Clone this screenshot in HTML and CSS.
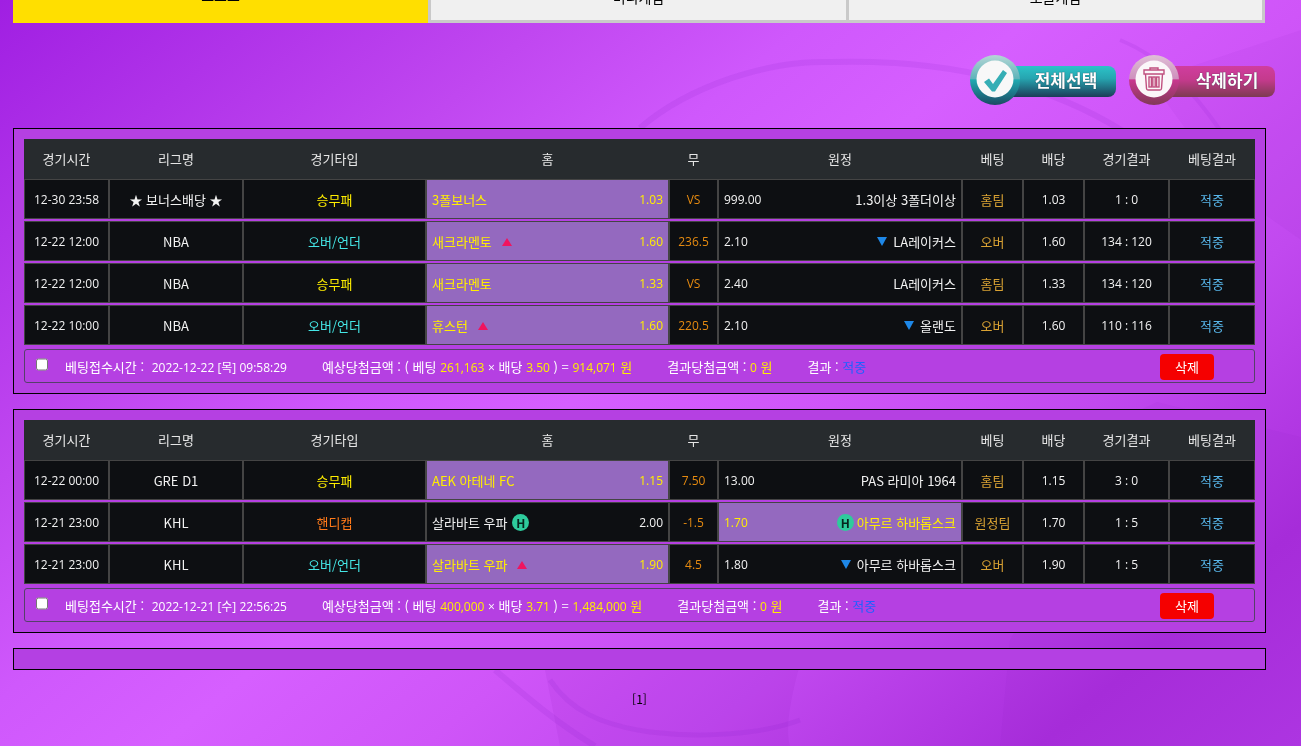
FILE: index.html
```html
<!DOCTYPE html>
<html lang="ko">
<head>
<meta charset="utf-8">
<title>베팅내역</title>
<link rel="stylesheet" href="styles.css">
</head>
<body>
<svg class="backdrop" viewBox="0 0 1301 746" preserveAspectRatio="none" aria-hidden="true">
  <g fill="#7a12b8">
    <path d="M1000 746 L1010 640 L1140 410 L1157 402 L1301 437 L1301 746Z" fill-opacity="0.05"/>
    <path d="M545 670 C600 660 740 650 800 664 C790 700 785 730 790 746 L560 746Z" fill-opacity="0.08"/>
    <path d="M1150 80 L1301 30 L1301 240 L1230 190Z" fill-opacity="0.05"/>
  </g>
  <g fill="none" stroke="#7a12b8" stroke-opacity="0.1">
    <path d="M640 128 C690 85 770 60 830 62 C960 58 1120 90 1215 215" stroke-width="6"/>
    <path d="M1120 40 C1170 60 1205 105 1240 160" stroke-width="4"/>
    <path d="M495 670 C530 700 560 725 595 746" stroke-width="6"/>
    <path d="M550 680 C570 710 600 725 650 732 C700 738 760 735 800 720" stroke-width="5"/>
  </g>
</svg>

<div class="page">
  <nav class="tabs">
    <a class="tab tab-active"><span>스포츠</span></a>
    <a class="tab tab-mid"><span>미니게임</span></a>
    <a class="tab tab-last"><span>보글게임</span></a>
  </nav>

  <div class="actions">
    <button class="action action-teal" type="button">
      <svg class="action-badge" viewBox="0 0 50 50" aria-hidden="true">
        <defs>
          <linearGradient id="rimTeal" x1="0" y1="0" x2="0" y2="1">
            <stop offset="0" stop-color="#b5d6d6"/><stop offset="0.47" stop-color="#5fb4ba"/>
            <stop offset="0.5" stop-color="#1fa9b0"/><stop offset="1" stop-color="#1c4a63"/>
          </linearGradient>
        </defs>
        <circle cx="25" cy="25" r="25" fill="url(#rimTeal)"/>
        <circle cx="25" cy="24" r="18.5" fill="#f8f8f8"/>
        <path d="M14 27 L19 23.5 L23 29 L33 15 L37 18 L25 36.5 L22 36.5Z" fill="#35aeb5"/>
      </svg>
      <span class="action-label">전체선택</span>
    </button>
    <button class="action action-pink" type="button">
      <svg class="action-badge" viewBox="0 0 50 50" aria-hidden="true">
        <defs>
          <linearGradient id="rimPink" x1="0" y1="0" x2="0" y2="1">
            <stop offset="0" stop-color="#dfc0d6"/><stop offset="0.47" stop-color="#cf90bd"/>
            <stop offset="0.5" stop-color="#c9378f"/><stop offset="1" stop-color="#803a56"/>
          </linearGradient>
        </defs>
        <circle cx="25" cy="25" r="25" fill="url(#rimPink)"/>
        <circle cx="25" cy="24" r="18.5" fill="#fbf7f9"/>
        <g fill="none" stroke="#c0507f" stroke-width="1.4">
          <path d="M21 15 V13 H29 V15"/>
          <path d="M15 15 H35 V19 H15Z"/>
          <path d="M16.5 19 L17.5 33.5 Q17.6 35 19 35 H31 Q32.4 35 32.5 33.5 L33.5 19"/>
          <rect x="20" y="22" width="2.4" height="10"/>
          <rect x="23.8" y="22" width="2.4" height="10"/>
          <rect x="27.6" y="22" width="2.4" height="10"/>
        </g>
      </svg>
      <span class="action-label">삭제하기</span>
    </button>
  </div>

  <section class="slip">
    <div class="row head">
      <div>경기시간</div><div>리그명</div><div>경기타입</div><div>홈</div><div>무</div><div>원정</div><div>베팅</div><div>배당</div><div>경기결과</div><div>베팅결과</div>
    </div>
    <div class="row">
      <div class="cell n">12-30 23:58</div>
      <div class="cell"><span>★ 보너스배당 ★</span></div>
      <div class="cell c-yellow">승무패</div>
      <div class="cell team picked"><span>3폴보너스</span><span class="n">1.03</span></div>
      <div class="cell c-orange n">VS</div>
      <div class="cell team"><span class="n">999.00</span><span>1.3이상 3폴더이상</span></div>
      <div class="cell c-gold">홈팀</div>
      <div class="cell n">1.03</div>
      <div class="cell n">1 : 0</div>
      <div class="cell c-sky">적중</div>
    </div>
    <div class="row">
      <div class="cell n">12-22 12:00</div>
      <div class="cell">NBA</div>
      <div class="cell c-cyan">오버/언더</div>
      <div class="cell team picked"><span class="name">새크라멘토<i class="up"></i></span><span class="n">1.60</span></div>
      <div class="cell c-orange n">236.5</div>
      <div class="cell team"><span class="n">2.10</span><span class="name"><i class="down"></i>LA레이커스</span></div>
      <div class="cell c-gold">오버</div>
      <div class="cell n">1.60</div>
      <div class="cell n">134 : 120</div>
      <div class="cell c-sky">적중</div>
    </div>
    <div class="row">
      <div class="cell n">12-22 12:00</div>
      <div class="cell">NBA</div>
      <div class="cell c-yellow">승무패</div>
      <div class="cell team picked"><span>새크라멘토</span><span class="n">1.33</span></div>
      <div class="cell c-orange n">VS</div>
      <div class="cell team"><span class="n">2.40</span><span>LA레이커스</span></div>
      <div class="cell c-gold">홈팀</div>
      <div class="cell n">1.33</div>
      <div class="cell n">134 : 120</div>
      <div class="cell c-sky">적중</div>
    </div>
    <div class="row">
      <div class="cell n">12-22 10:00</div>
      <div class="cell">NBA</div>
      <div class="cell c-cyan">오버/언더</div>
      <div class="cell team picked"><span class="name">휴스턴<i class="up"></i></span><span class="n">1.60</span></div>
      <div class="cell c-orange n">220.5</div>
      <div class="cell team"><span class="n">2.10</span><span class="name"><i class="down"></i>올랜도</span></div>
      <div class="cell c-gold">오버</div>
      <div class="cell n">1.60</div>
      <div class="cell n">110 : 116</div>
      <div class="cell c-sky">적중</div>
    </div>
    <div class="summary">
      <input class="tick" type="checkbox">
      <span class="s-time">베팅접수시간 : <span class="n date">2022-12-22 [목] 09:58:29</span></span>
      <span>예상당첨금액 : ( 베팅 <b class="n">261,163</b> <span class="n">×</span> 배당 <b class="n">3.50</b> ) = <b class="n">914,071</b> <b>원</b></span>
      <span>결과당첨금액 : <b class="n">0</b> <b>원</b></span>
      <span>결과 : <em>적중</em></span>
      <button class="del" type="button">삭제</button>
    </div>
  </section>

  <section class="slip">
    <div class="row head">
      <div>경기시간</div><div>리그명</div><div>경기타입</div><div>홈</div><div>무</div><div>원정</div><div>베팅</div><div>배당</div><div>경기결과</div><div>베팅결과</div>
    </div>
    <div class="row">
      <div class="cell n">12-22 00:00</div>
      <div class="cell">GRE D1</div>
      <div class="cell c-yellow">승무패</div>
      <div class="cell team picked"><span>AEK 아테네 FC</span><span class="n">1.15</span></div>
      <div class="cell c-orange n">7.50</div>
      <div class="cell team"><span class="n">13.00</span><span>PAS 라미아 1964</span></div>
      <div class="cell c-gold">홈팀</div>
      <div class="cell n">1.15</div>
      <div class="cell n">3 : 0</div>
      <div class="cell c-sky">적중</div>
    </div>
    <div class="row">
      <div class="cell n">12-21 23:00</div>
      <div class="cell">KHL</div>
      <div class="cell c-hot">핸디캡</div>
      <div class="cell team"><span class="name">살라바트 우파<i class="h">H</i></span><span class="n">2.00</span></div>
      <div class="cell c-orange n">-1.5</div>
      <div class="cell team picked"><span class="n">1.70</span><span class="name"><i class="h h-before">H</i>아무르 하바롭스크</span></div>
      <div class="cell c-gold">원정팀</div>
      <div class="cell n">1.70</div>
      <div class="cell n">1 : 5</div>
      <div class="cell c-sky">적중</div>
    </div>
    <div class="row">
      <div class="cell n">12-21 23:00</div>
      <div class="cell">KHL</div>
      <div class="cell c-cyan">오버/언더</div>
      <div class="cell team picked"><span class="name">살라바트 우파<i class="up"></i></span><span class="n">1.90</span></div>
      <div class="cell c-orange n">4.5</div>
      <div class="cell team"><span class="n">1.80</span><span class="name"><i class="down"></i>아무르 하바롭스크</span></div>
      <div class="cell c-gold">오버</div>
      <div class="cell n">1.90</div>
      <div class="cell n">1 : 5</div>
      <div class="cell c-sky">적중</div>
    </div>
    <div class="summary">
      <input class="tick" type="checkbox">
      <span class="s-time">베팅접수시간 : <span class="n date">2022-12-21 [수] 22:56:25</span></span>
      <span>예상당첨금액 : ( 베팅 <b class="n">400,000</b> <span class="n">×</span> 배당 <b class="n">3.71</b> ) = <b class="n">1,484,000</b> <b>원</b></span>
      <span>결과당첨금액 : <b class="n">0</b> <b>원</b></span>
      <span>결과 : <em>적중</em></span>
      <button class="del" type="button">삭제</button>
    </div>
  </section>

  <div class="empty-slip"></div>

  <div class="pager">[1]</div>
</div>
</body>
</html>
```
FILE: styles.css
```css
* { box-sizing: border-box; }

html, body { height: 100%; }

body {
  margin: 0;
  overflow: hidden;
  font: 13px/1.2 "Noto Sans CJK KR", sans-serif;
  color: #f0f0f0;
  background: linear-gradient(140deg, #a01fe2 0%, #c047f0 26%, #cf58fc 38%, #d65fff 48%, #cf55f8 60%, #c149ef 72%, #a92edc 88%, #b037e4 100%);
}

.backdrop {
  position: fixed;
  inset: 0;
  width: 100%;
  height: 100%;
  z-index: -1;
}

.page { padding: 0 35px 0 13px; }

.n {
  font-family: "Open Sans", "Noto Sans CJK KR", sans-serif;
  font-size: 12px;
}

/* tabs */
.tabs { display: flex; height: 23px; }

.tab {
  display: flex;
  justify-content: center;
  align-items: flex-end;
  padding-bottom: 13px;
  font-size: 14px;
  line-height: 20px;
  color: #000;
  background: #f0f0f0;
  border: solid #c9c9c9;
  border-width: 0 0 3px 3px;
}
.tab-active { width: 415px; padding-bottom: 18px; background: #ffdf00; border: 0; }
.tab-mid { width: 418px; }
.tab-last { width: 419px; border-right-width: 3px; }

/* action buttons */
.actions {
  display: flex;
  justify-content: flex-end;
  gap: 13px;
  margin: 32px -9px 23px 0;
}

.action {
  display: flex;
  align-items: center;
  width: 146px;
  height: 50px;
  padding: 0;
  border: 0;
  background: none;
  font: inherit;
  cursor: pointer;
}

.action-badge { flex: none; width: 50px; height: 50px; z-index: 1; }

.action-label {
  flex: 1;
  height: 31px;
  margin: 2px 0 0 -19px;
  padding: 0 0 0 15px;
  border-radius: 0 8px 8px 0;
  font-size: 17px;
  font-weight: 700;
  line-height: 28px;
  color: #fff;
  text-shadow: 0 0 1px #123;
}
.action-teal .action-label { background: linear-gradient(#2cc3c8 0%, #26a5b0 40%, #1c3c58 100%); }
.action-pink .action-label { padding-left: 19px; background: linear-gradient(#d03d9f 0%, #c43a8c 45%, #7d3a52 100%); }

/* slip box */
.slip {
  display: flex;
  flex-direction: column;
  gap: 2px;
  margin-bottom: 15px;
  padding: 10px;
  border: 1px solid #000;
  background: #b540e2;
}

.row {
  display: grid;
  grid-template-columns: 85px 134px 183px 243px 49px 244px 61px 61px 85px 86px;
  height: 40px;
}

.head {
  margin-bottom: -2px;
  align-items: center;
  text-align: center;
  background: #272b2e;
  color: #e6e6e6;
}

.cell {
  display: flex;
  justify-content: center;
  align-items: center;
  padding-top: 1px;
  border: 1px solid #444;
  background: #0d0f12;
  color: #f2f2f2;
}
.cell.n { padding-top: 3px; }

.team { justify-content: space-between; padding: 1px 5px 0; }
.team > .n { padding-top: 2px; }
.picked { background: #9469bf; color: #ffee00; }

.name { display: flex; align-items: center; }

.up, .down {
  width: 0;
  height: 0;
  border-left: 5px solid transparent;
  border-right: 5px solid transparent;
}
.up { margin-left: 10px; border-bottom: 8px solid #f0145f; }
.down { margin-right: 6px; border-top: 9px solid #1e88e8; }

.h {
  display: inline-flex;
  justify-content: center;
  align-items: center;
  width: 17px;
  height: 17px;
  margin-left: 5px;
  border-radius: 50%;
  background: #2ecb9c;
  color: #06251d;
  font: 700 12px/1 "Noto Sans CJK KR", sans-serif;
}
.h-before { margin: 0 3px 0 0; }

.c-yellow { color: #ffee00; }
.c-cyan { color: #45e6e6; }
.c-hot { color: #ff7a1a; }
.c-orange { color: #e58a10; }
.c-gold { color: #d9a233; }
.c-sky { color: #58b6ea; }

/* summary */
.summary {
  display: flex;
  align-items: center;
  gap: 35px;
  height: 34px;
  margin-top: 2px;
  padding: 2px 40px 0 11px;
  border: 1px solid #55406b;
  border-radius: 3px;
  color: #fff;
}
.summary b { font-weight: 400; color: #ffee00; }
.summary em { font-style: normal; color: #2060ff; }

.tick {
  width: 12px;
  height: 13px;
  margin: -6px -18px 0 0;
}

.date { margin-left: 4px; }

.del {
  margin-left: auto;
  width: 54px;
  height: 26px;
  padding: 0;
  border: 0;
  border-radius: 4px;
  background: #f50000;
  color: #fff;
  font: inherit;
}

.empty-slip {
  height: 22px;
  border: 1px solid #000;
  background: #b440e3;
}

.pager {
  margin-top: 22px;
  text-align: center;
  font-size: 12px;
  color: #000;
}
```
